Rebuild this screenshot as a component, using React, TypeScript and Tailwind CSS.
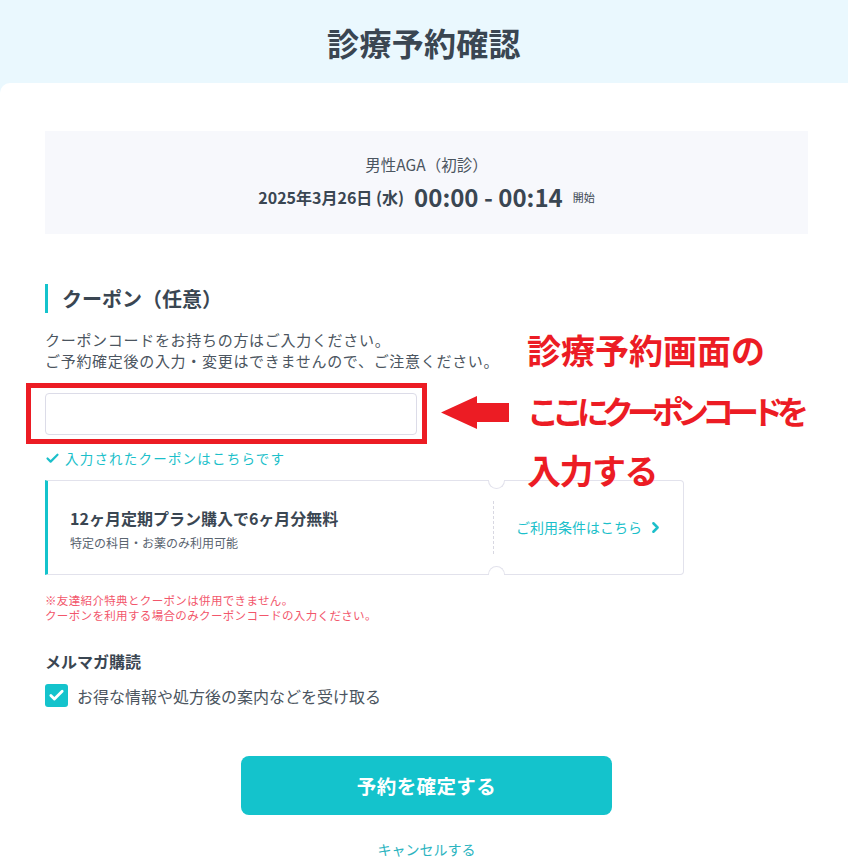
import React from 'react';
import { Check, ChevronRight } from 'lucide-react';

const Ticket: React.FC = () => {
  return (
    <div className="relative mt-[13px] flex h-[95px] w-[639px] rounded-r-[4px] border border-l-[3px] border-[#e2e2ec] border-l-[#14c3cc] bg-white">
      {/* notches */}
      <div className="absolute -top-px left-[440px] h-[9px] w-[17px] rounded-b-full border border-t-0 border-[#e2e2ec] bg-white" />
      <div className="absolute -bottom-px left-[440px] h-[9px] w-[17px] rounded-t-full border border-b-0 border-[#e2e2ec] bg-white" />

      <div className="flex flex-1 flex-col pl-[22px] pt-[26px]">
        <p className="text-[16px] font-bold leading-[22px] text-[#3a4652]">12ヶ月定期プラン購入で6ヶ月分無料</p>
        <p className="mt-[5px] text-[12px] leading-[17px] text-[#5a6470]">特定の科目・お薬のみ利用可能</p>
      </div>

      <div className="h-[53px] self-center border-l border-dashed border-[#d8d8e2]" />

      <a className="flex w-[189px] items-center pl-[22px] text-[14px] text-[#1cbfca]">
        ご利用条件はこちら
        <ChevronRight className="ml-[5px] h-[17px] w-[17px]" strokeWidth={3.5} />
      </a>
    </div>
  );
};

const App: React.FC = () => {
  return (
    <div className="min-h-screen bg-[#eaf8fe] [font-family:'Noto_Sans_CJK_JP','Noto_Sans',sans-serif] text-[#4b5560]">
      <header className="flex h-[83px] items-center justify-center">
        <h1 className="text-[32px] font-bold tracking-[0.3px] text-[#3a4652]">診療予約確認</h1>
      </header>

      <main className="relative min-h-[782px] rounded-tl-[10px] bg-white pb-[20px] pl-[45px] pr-[40px] pt-[48px]">
        {/* reservation summary */}
        <div className="flex h-[103px] flex-col items-center justify-center bg-[#f7f8fc]">
          <p className="text-[15.5px] leading-[20px] text-[#4b5560]">男性AGA（初診）</p>
          <div className="mt-[9px] flex h-[28px] items-center gap-[10px] text-[#3a4652]">
            <span className="text-[16px] font-bold">2025年3月26日 (水)</span>
            <span className="text-[24px] font-bold">00:00 - 00:14</span>
            <span className="text-[11px]">開始</span>
          </div>
        </div>

        {/* coupon */}
        <h2 className="mt-[50px] flex h-[29px] items-center border-l-[3px] border-[#14c3cc] pl-[14px] text-[20px] font-bold text-[#3a4652]">
          クーポン（任意）
        </h2>
        <p className="mt-[16px] text-[15px] leading-[21px] tracking-[0.7px] text-[#4b5560]">
          クーポンコードをお持ちの方はご入力ください。
          <br />
          ご予約確定後の入力・変更はできませんので、ご注意ください。
        </p>

        <div className="relative mt-[22px] w-[372px]">
          <input type="text" className="block h-[42px] w-full rounded-[4px] border border-[#dcdce8] px-3 outline-none" />
          <div className="pointer-events-none absolute left-[-19px] top-[-10px] h-[61px] w-[401px] border-[5px] border-[#ec1c24]" />
        </div>

        <p className="mt-[14px] flex items-center gap-[5px] text-[13.5px] leading-[18px] tracking-[1.2px] text-[#1cbfca]">
          <Check className="h-[15px] w-[15px]" strokeWidth={3.5} />
          入力されたクーポンはこちらです
        </p>

        <Ticket />

        <div className="mt-[18px] text-[11.5px] leading-[15px] tracking-[0.35px] text-[#f2566b]">
          <p>※友達紹介特典とクーポンは併用できません。</p>
          <p>クーポンを利用する場合のみクーポンコードの入力ください。</p>
        </div>

        {/* newsletter */}
        <h3 className="mt-[27px] text-[16px] font-bold leading-[22px] text-[#3a4652]">メルマガ購読</h3>
        <label className="mt-[12px] flex h-[23px] items-center gap-[9px]">
          <span className="flex h-[23px] w-[23px] items-center justify-center rounded-[3px] bg-[#14c3cc]">
            <Check className="h-[17px] w-[17px] text-white" strokeWidth={4} />
          </span>
          <span className="text-[16px] text-[#4b5560]">お得な情報や処方後の案内などを受け取る</span>
        </label>

        <div className="mt-[49px] flex flex-col items-center">
          <button className="h-[59px] w-[371px] rounded-[8px] bg-[#14c3cc] text-[19.5px] font-bold tracking-[0.4px] text-white">
            予約を確定する
          </button>
          <a className="mt-[24px] text-[14px] leading-[20px] text-[#2bb4c0]">キャンセルする</a>
        </div>

        {/* annotation overlay */}
        <svg className="absolute left-[441px] top-[313px]" width="69" height="34" viewBox="0 0 69 34">
          <path d="M0 16.5 L36 0 L36 7 L68 7 L68 26 L36 26 L36 33 Z" fill="#ec1c24" />
        </svg>
        <div className="pointer-events-none absolute left-[527px] top-[237px] whitespace-nowrap text-[34px] font-bold leading-[60px] text-[#ec1c24]">
          <p>診療予約画面の</p>
          <p className="text-[32px] tracking-[-7px]">ここにクーポンコードを</p>
          <p className="tracking-[-1.5px]">入力する</p>
        </div>
      </main>
    </div>
  );
};

export default App;
